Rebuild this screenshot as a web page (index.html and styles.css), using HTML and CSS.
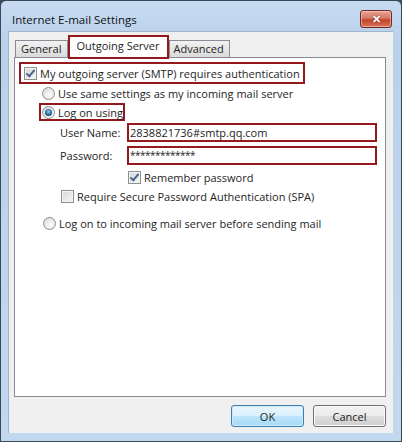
FILE: index.html
```html
<!DOCTYPE html>
<html>
  <head>
    <title>Internet E-mail Settings</title>
    <link rel="stylesheet" href="styles.css">
  </head>
  <body>
    <div class="window">
      <div class="titlebar">
        <span class="title">Internet E-mail Settings</span>
        <span class="close-btn">&#x2715;</span>
      </div>

      <div class="dialog">
        <div class="tabs">
          <span class="tab tab-general">General</span>
          <span class="tab tab-active">Outgoing Server</span>
          <span class="tab tab-advanced">Advanced</span>
        </div>

        <div class="panel">
          <div class="row row-auth marked">
            <span class="check on"></span>
            <span>My outgoing server (SMTP) requires authentication</span>
          </div>
          <div class="row row-same">
            <span class="radio"></span>
            <span>Use same settings as my incoming mail server</span>
          </div>
          <div class="row row-logon marked">
            <span class="radio on"></span>
            <span>Log on using</span>
          </div>
          <div class="row field-row field-user">
            <label class="field-label">User Name:</label>
            <div class="field marked">2838821736#smtp.qq.com</div>
          </div>
          <div class="row field-row field-pass">
            <label class="field-label">Password:</label>
            <div class="field field-secret marked">*************</div>
          </div>
          <div class="row row-remember">
            <span class="check on"></span>
            <span>Remember password</span>
          </div>
          <div class="row row-spa">
            <span class="check"></span>
            <span>Require Secure Password Authentication (SPA)</span>
          </div>
          <div class="row row-before">
            <span class="radio"></span>
            <span>Log on to incoming mail server before sending mail</span>
          </div>
        </div>

        <div class="buttons">
          <button class="btn btn-default">OK</button>
          <button class="btn">Cancel</button>
        </div>
      </div>
    </div>
  </body>
</html>
```

FILE: styles.css
```css
html, body {
  margin: 0;
  padding: 0;
  background-color: #3b4857;
}

body {
  font-family: "Open Sans", "Noto Sans", sans-serif;
  font-size: 11px;
  color: #1e1e1e;
}

.window {
  width: 402px;
  height: 442px;
  box-sizing: border-box;
  border: 1px solid #3b4857;
  border-radius: 6px 6px 0 0;
  background: linear-gradient(#c6dbf1, #b9d1ea 40px, #c2d8ee);
  padding: 0 8px 8px 7px;
  display: flex;
  flex-direction: column;
}

.titlebar {
  height: 30px;
  display: flex;
  align-items: center;
  justify-content: space-between;
}

.title {
  padding-left: 4px;
  padding-top: 6px;
  font-size: 11.5px;
  color: #111;
}

.close-btn {
  width: 30px;
  height: 16px;
  margin-right: 1px;
  margin-top: 6px;
  border: 1px solid #6e2a22;
  border-radius: 3px;
  background: linear-gradient(#e6a393, #d47a66 45%, #c0442c 55%, #d9735c);
  box-shadow: inset 0 0 0 1px rgba(255, 220, 210, 0.5);
  color: #fff;
  font-size: 11px;
  font-weight: bold;
  line-height: 16px;
  text-align: center;
  text-shadow: 0 0 2px #6e2a1a;
}

.dialog {
  flex: 1;
  background-color: #f0f0f0;
  border: 1px solid #9fb4cb;
  border-bottom: none;
  border-right: none;
  padding: 0 7px 0 5px;
  display: flex;
  flex-direction: column;
}

.tabs {
  display: flex;
  align-items: flex-end;
  height: 19px;
  margin-top: 6px;
  padding-left: 1px;
  position: relative;
  z-index: 1;
}

.tab {
  height: 16px;
  line-height: 16px;
  border: 1px solid #898c95;
  border-bottom: none;
  background: linear-gradient(#f2f2f2, #e6e6e6 50%, #dadada);
}

.tab-general {
  padding: 0 6px 0 5px;
}

.tab-advanced {
  padding: 0 5px 0 4px;
}

.tab-active {
  height: 20px;
  line-height: 18px;
  padding: 0 7px 0 6px;
  background: #fff;
  border: 2px solid #93191d;
  margin-bottom: -2px;
}

.panel {
  height: 338px;
  background-color: #fff;
  border: 1px solid #898c95;
  display: flex;
  flex-direction: column;
}

.row {
  display: flex;
  align-items: center;
  white-space: nowrap;
}

.marked {
  border: 2px solid #93191d;
  box-sizing: border-box;
}

.row-auth {
  align-self: flex-start;
  margin: 4px 0 0 4px;
  height: 22px;
  padding: 0 3px 0 3px;
  gap: 3px;
}

.row-same {
  height: 18px;
  padding-left: 27px;
  gap: 3px;
}

.row-logon {
  align-self: flex-start;
  height: 18px;
  margin: 1px 0 0 24px;
  padding-left: 1px;
  gap: 3px;
}

.field-row {
  margin-left: 45px;
}

.field-user {
  margin-top: 2px;
}

.field-pass {
  margin-top: 4px;
}

.field-label {
  width: 67px;
}

.field {
  width: 250px;
  height: 19px;
  line-height: 15px;
  padding-left: 1px;
  background: #fff;
}

.field-secret {
  font-size: 10px;
  letter-spacing: -0.5px;
}

.row-remember {
  height: 16px;
  margin: 4px 0 0 113px;
  gap: 3px;
}

.row-spa {
  height: 16px;
  margin: 3px 0 0 46px;
  gap: 3px;
}

.row-before {
  height: 17px;
  margin: 11px 0 0 28px;
  gap: 3px;
}

.check {
  width: 11px;
  height: 11px;
  border: 1px solid #8e8f8f;
  background: linear-gradient(135deg, #d6d6d6, #f6f6f6);
  box-shadow: inset 0 0 0 1px #f4f4f4;
  position: relative;
}

.check.on::after {
  content: "";
  position: absolute;
  left: 3px;
  top: 0;
  width: 3px;
  height: 7px;
  border: solid #4a6690;
  border-width: 0 2px 2px 0;
  transform: rotate(40deg);
}

.radio {
  width: 11px;
  height: 11px;
  border: 1px solid #8e8f8f;
  border-radius: 50%;
  background: radial-gradient(circle at 60% 65%, #fdfdfd, #d5d5d5);
  position: relative;
}

.radio.on::after {
  content: "";
  position: absolute;
  left: 2px;
  top: 2px;
  width: 7px;
  height: 7px;
  border-radius: 50%;
  background: radial-gradient(circle at 50% 40%, #8fd3f5, #1a5a8a 60%, #0d2c4a);
}

.buttons {
  display: flex;
  justify-content: flex-end;
  gap: 9px;
  margin-top: 8px;
}

.btn {
  width: 73px;
  height: 22px;
  font-family: inherit;
  font-size: 11px;
  color: #1e1e1e;
  border: 1px solid #707070;
  border-radius: 3px;
  background: linear-gradient(#f2f2f2, #ebebeb 50%, #dddddd 51%, #cfcfcf);
  box-shadow: inset 0 0 0 1px #fcfcfc;
  padding: 0;
}

.btn-default {
  border-color: #3c7fb1;
  background: linear-gradient(#eaf6fd, #d9f0fc 50%, #bee6fd 51%, #a7d9f5);
  box-shadow: inset 0 0 0 1px #cdeafa;
}
```
